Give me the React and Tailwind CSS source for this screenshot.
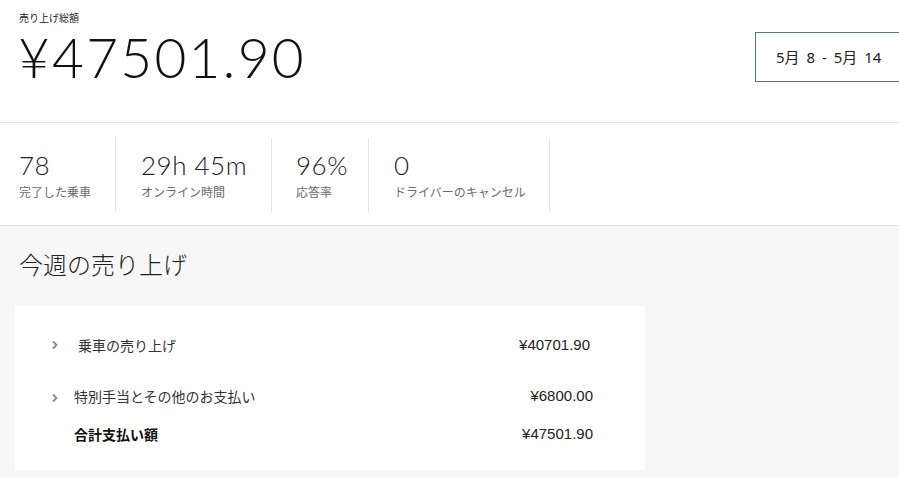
import React from "react";

const stats = [
  { value: "78", label: "完了した乗車", w: "w-[116px]", pl: "pl-[19px]" },
  { value: "29h 45m", label: "オンライン時間", w: "w-[156px]", pl: "pl-[25px]" },
  { value: "96%", label: "応答率", w: "w-[97px]", pl: "pl-[24px]" },
  { value: "0", label: "ドライバーのキャンセル", w: "w-[181px]", pl: "pl-[25px]" },
];

const Chevron = () => (
  <svg width="8" height="10" viewBox="0 0 8 10" className="shrink-0">
    <path d="M2 1.5 L5.5 5 L2 8.5" fill="none" stroke="#8a8a8a" strokeWidth="1.8" />
  </svg>
);

const App = () => {
  return (
    <div
      className="w-[899px] h-[477px] overflow-hidden bg-[#f7f7f7] text-[#222]"
      style={{ fontFamily: '"Noto Sans", "Noto Sans CJK JP", sans-serif' }}
    >
      {/* header */}
      <div className="bg-white h-[123px] border-b border-[#e3e3e3] flex justify-between items-start">
        <div className="pl-[19px] pt-[11px]">
          <div className="text-[10px] leading-[14px] text-[#222]">売り上げ総額</div>
          <div
            className="text-[55px] leading-[60px] font-light tracking-[2.2px] text-[#111] mt-[2px] -ml-[1px]"
            style={{ fontFamily: 'Lato, "Noto Sans CJK JP", sans-serif' }}
          >
            ¥47501.90
          </div>
        </div>
        <div className="mt-[32px] -mr-[10px] w-[154px] shrink-0 h-[50px] border border-[#4e7c82] flex items-center pl-[20px] text-[15px] text-[#222] whitespace-nowrap [word-spacing:3px]">
          5月 8 - 5月 14
        </div>
      </div>

      {/* stats */}
      <div className="bg-white h-[103px] border-b border-[#e3e3e3] flex items-start pt-[15px]">
        {stats.map((s) => (
          <div
            key={s.label}
            className={`h-[74px] border-r border-[#e3e3e3] pt-[13px] ${s.w} ${s.pl}`}
          >
            <div
              className="text-[26px] leading-[28px] font-light text-[#222] tracking-[0.5px]"
              style={{ fontFamily: 'Lato, "Noto Sans CJK JP", sans-serif' }}
            >
              {s.value}
            </div>
            <div className="text-[12px] leading-[16px] text-[#6b6b6b] mt-[6px] whitespace-nowrap">
              {s.label}
            </div>
          </div>
        ))}
      </div>

      {/* weekly */}
      <div className="pl-[19px] pt-[23px]">
        <div className="text-[24px] leading-[32px] font-light text-[#222]">今週の売り上げ</div>
      </div>
      <div className="ml-[15px] mt-[25px] w-[630px] h-[164px] bg-white pt-[27px]">
        <div className="flex items-center h-[24px] pl-[36px] pr-[55px]">
          <Chevron />
          <span className="ml-[19px] text-[14px] text-[#333]">乗車の売り上げ</span>
          <span
            className="ml-auto text-[15px] text-[#222]"
            style={{ fontFamily: '"Liberation Sans", sans-serif' }}
          >
            ¥40701.90
          </span>
        </div>
        <div className="flex items-center h-[24px] pl-[36px] pr-[52px] mt-[29px]">
          <Chevron />
          <span className="ml-[15px] text-[14px] text-[#333] -mt-[4px]">特別手当とその他のお支払い</span>
          <span
            className="ml-auto text-[15px] text-[#222] -mt-[4px]"
            style={{ fontFamily: '"Liberation Sans", sans-serif' }}
          >
            ¥6800.00
          </span>
        </div>
        <div className="flex items-center h-[24px] pl-[59px] pr-[52px] mt-[12px]">
          <span className="text-[14px] font-bold text-[#111]">合計支払い額</span>
          <span
            className="ml-auto text-[15px] text-[#222]"
            style={{ fontFamily: '"Liberation Sans", sans-serif' }}
          >
            ¥47501.90
          </span>
        </div>
      </div>
    </div>
  );
};

export default App;
